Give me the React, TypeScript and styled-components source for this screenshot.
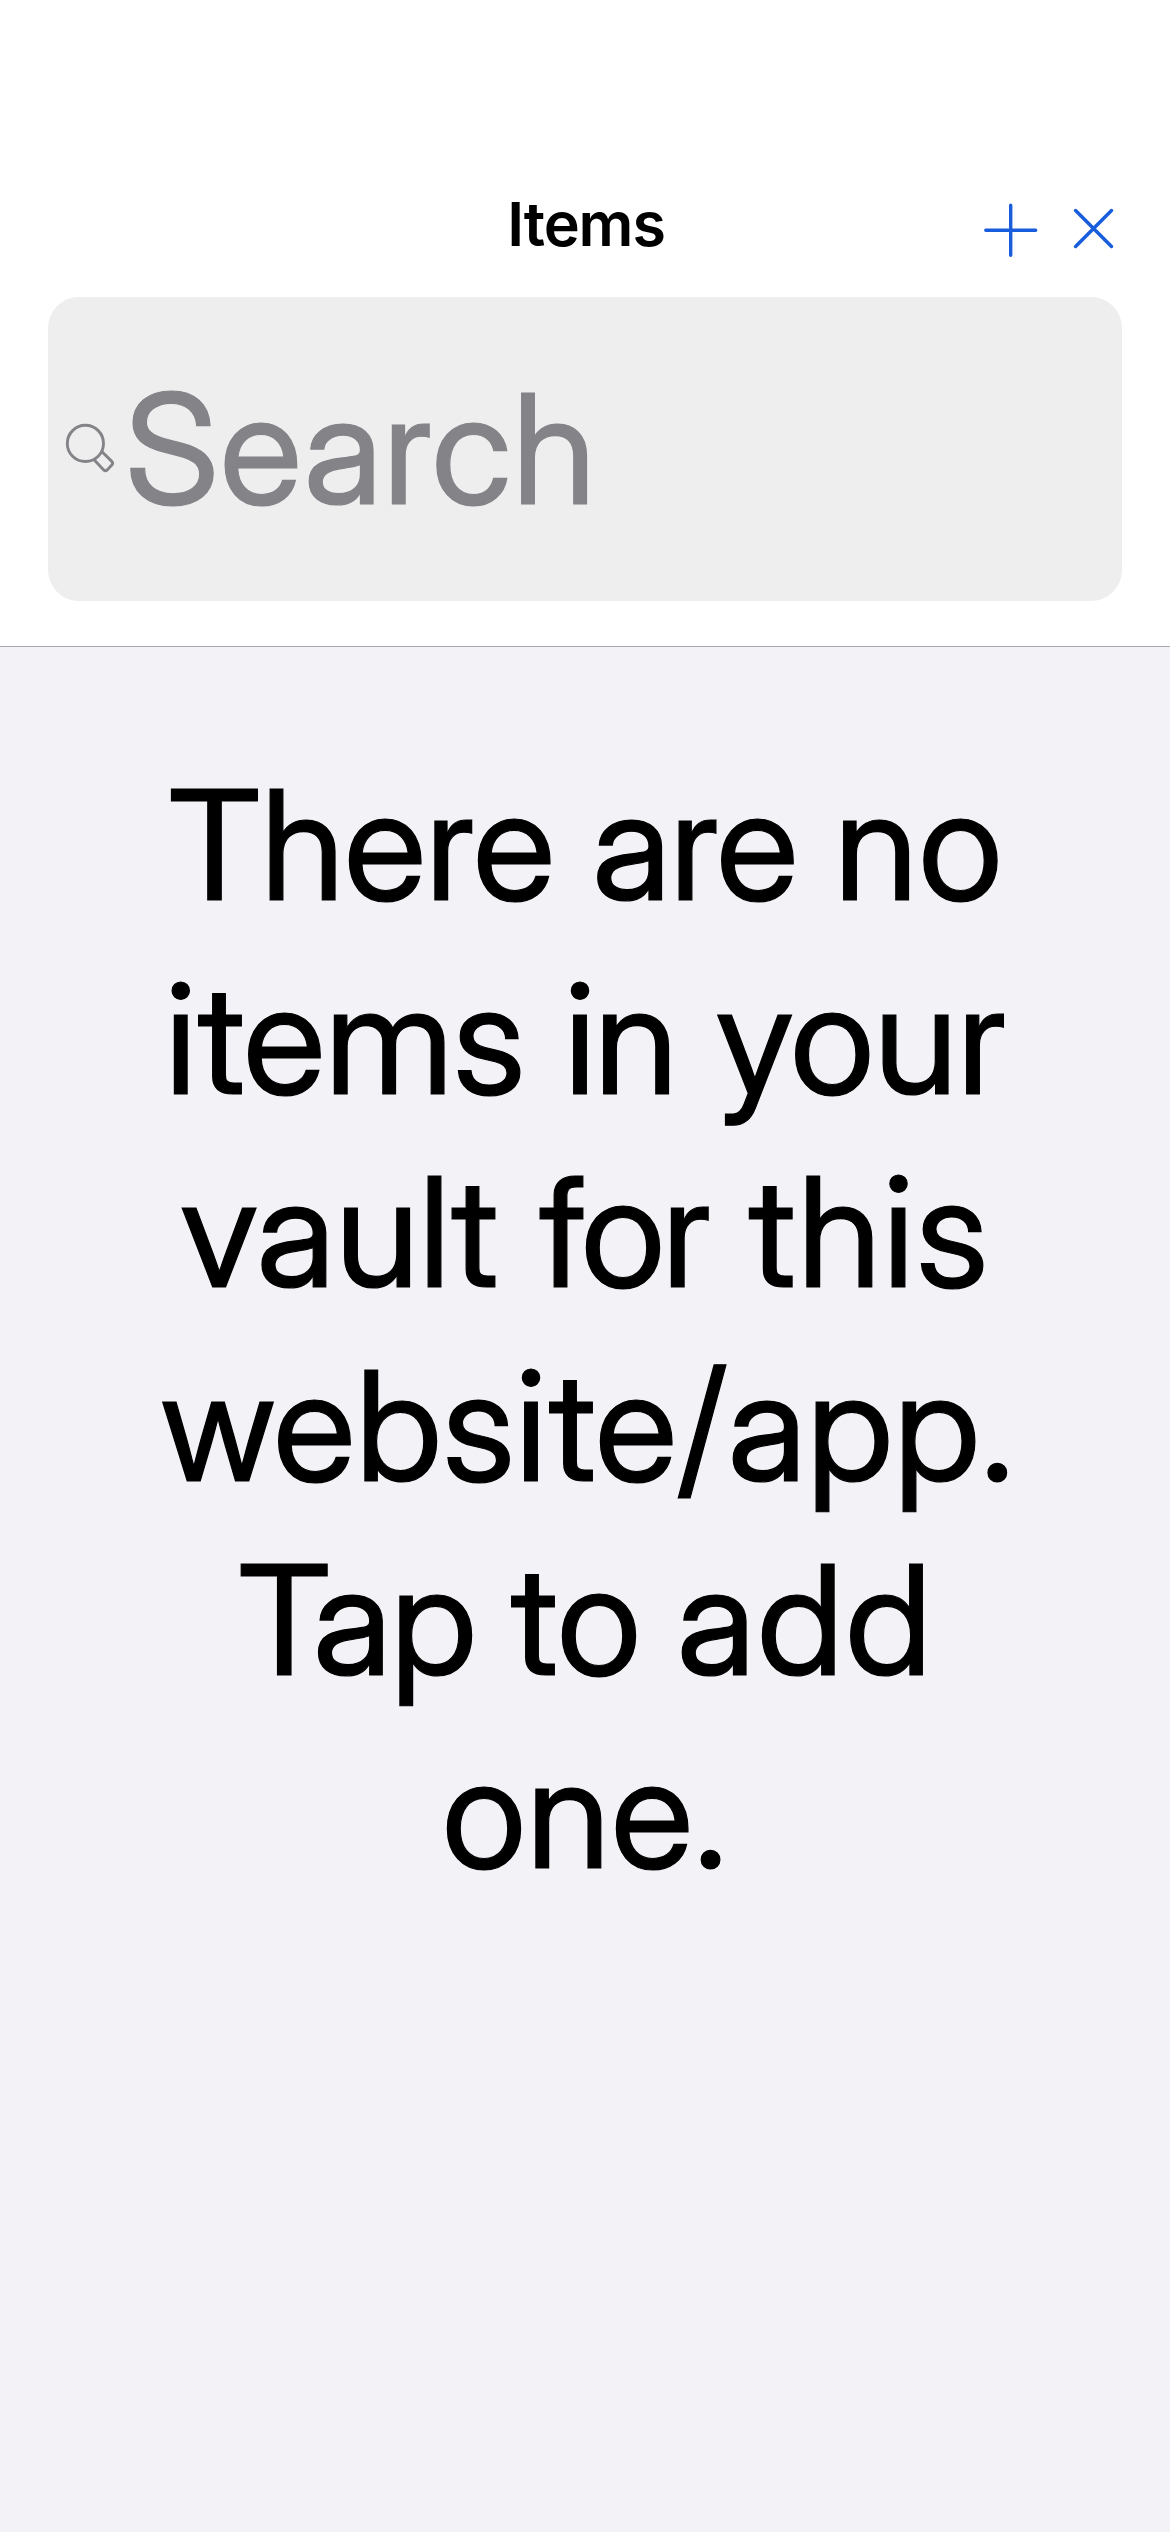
import React, { Fragment } from "react";
import styled, { createGlobalStyle } from "styled-components";

const GlobalStyle = createGlobalStyle`
  * { box-sizing: border-box; }
  body {
    margin: 0;
    background: #f3f2f7;
    font-family: "Inter Display", Inter, "Liberation Sans", sans-serif;
  }
`;

const Screen = styled.div`
  display: flex;
  flex-direction: column;
  width: 1170px;
  height: 2532px;
  overflow: hidden;
  background: #f3f2f7;
`;

const Header = styled.header`
  display: flex;
  flex-direction: column;
  gap: 23px;
  height: 647px;
  padding-top: 174px;
  background: #ffffff;
  border-bottom: 1px solid #a9a9ad;
`;

const NavBar = styled.nav`
  display: grid;
  grid-template-columns: 1fr auto 1fr;
  height: 100px;
`;

const Title = styled.h1`
  grid-column: 2;
  margin: 0 0 0 2px;
  font-family: Inter, "Liberation Sans", sans-serif;
  font-size: 61px;
  font-weight: 600;
  line-height: 100px;
  letter-spacing: -1.1px;
  color: #000000;
`;

const Actions = styled.div`
  display: flex;
  justify-content: flex-end;
  gap: 24px;
  padding-right: 46px;
`;

const IconButton = styled.button`
  width: 60px;
  height: 100px;
  padding: 0;
  border: 0;
  background: none;
  color: #175ddc;

  svg {
    display: block;
  }
`;

const SearchField = styled.div`
  display: flex;
  align-items: center;
  gap: 1px;
  height: 304px;
  margin: 0 48px;
  padding-left: 12px;
  border-radius: 31px;
  background: #eeeeee;
  color: #848388;
`;

const SearchLabel = styled.span`
  font-size: 153px;
  line-height: 194px;
  letter-spacing: 0.7px;
  -webkit-text-stroke: 1.2px currentColor;
`;

const EmptyState = styled.main`
  flex: 1;
  padding-top: 101px;
`;

const Message = styled.p`
  margin: 0;
  font-size: 153px;
  line-height: 193.67px;
  text-align: center;
  color: #000000;
  -webkit-text-stroke: 1.2px currentColor;
`;

const Line = styled.span<{ $space?: number; $shift?: number }>`
  display: block;
  white-space: nowrap;
  word-spacing: ${(p) => p.$space ?? 0}px;
  padding-left: ${(p) => p.$shift ?? 0}px;
`;

const Word = styled.span<{ $tracking: number }>`
  letter-spacing: ${(p) => p.$tracking}px;
`;

type LineSpec = { words: [string, number][]; space?: number; shift?: number };

const message: LineSpec[] = [
  { words: [["There", -0.45], ["are", -1.2], ["no", 0.6]], space: -1.1, shift: 1 },
  { words: [["items", -0.4], ["in", -1.5], ["your", -0.4]], space: 0.8, shift: 1 },
  { words: [["vault", 0], ["for", -3.2], ["this", 1.6]], space: 2 },
  { words: [["website/app.", 0.3]], shift: 5 },
  { words: [["Tap", -1.2], ["to", 0.5], ["add", 1.7]], space: -3.6, shift: 1 },
  { words: [["one.", 0.7]] },
];

const PlusIcon = () => (
  <svg width="60" height="100" viewBox="0 0 60 100" fill="none" stroke="currentColor" strokeWidth="3.4" strokeLinecap="round">
    <path d="M30.7 31.2V81.3M5.8 56.3H55.7" />
  </svg>
);

const CloseIcon = () => (
  <svg width="60" height="100" viewBox="0 0 60 100" fill="none" stroke="currentColor" strokeWidth="3.5" strokeLinecap="round">
    <path d="M11.6 36.6L47.5 72.5M47.5 36.6L11.6 72.5" />
  </svg>
);

const SearchIcon = () => (
  <svg width="64" height="78" viewBox="0 0 64 78" fill="none" stroke="currentColor" strokeWidth="2.9" strokeLinejoin="round">
    <circle cx="25.4" cy="33.4" r="18.1" />
    <path d="M34.3 50L43.7 59.9Q45.4 61.6 47.2 59.9L51.8 55.1Q53.5 53.2 51.8 51.4L42 41.8" />
  </svg>
);

export default function App() {
  return (
    <>
      <GlobalStyle />
      <Screen>
        <Header>
          <NavBar>
            <Title>Items</Title>
            <Actions>
              <IconButton>
                <PlusIcon />
              </IconButton>
              <IconButton>
                <CloseIcon />
              </IconButton>
            </Actions>
          </NavBar>
          <SearchField>
            <SearchIcon />
            <SearchLabel>Search</SearchLabel>
          </SearchField>
        </Header>
        <EmptyState>
          <Message>
            {message.map((line, i) => (
              <Line key={i} $space={line.space} $shift={line.shift}>
                {line.words.map(([word, tracking], j) => (
                  <Fragment key={word}>
                    {j > 0 && " "}
                    <Word $tracking={tracking}>{word}</Word>
                  </Fragment>
                ))}
              </Line>
            ))}
          </Message>
        </EmptyState>
      </Screen>
    </>
  );
}
